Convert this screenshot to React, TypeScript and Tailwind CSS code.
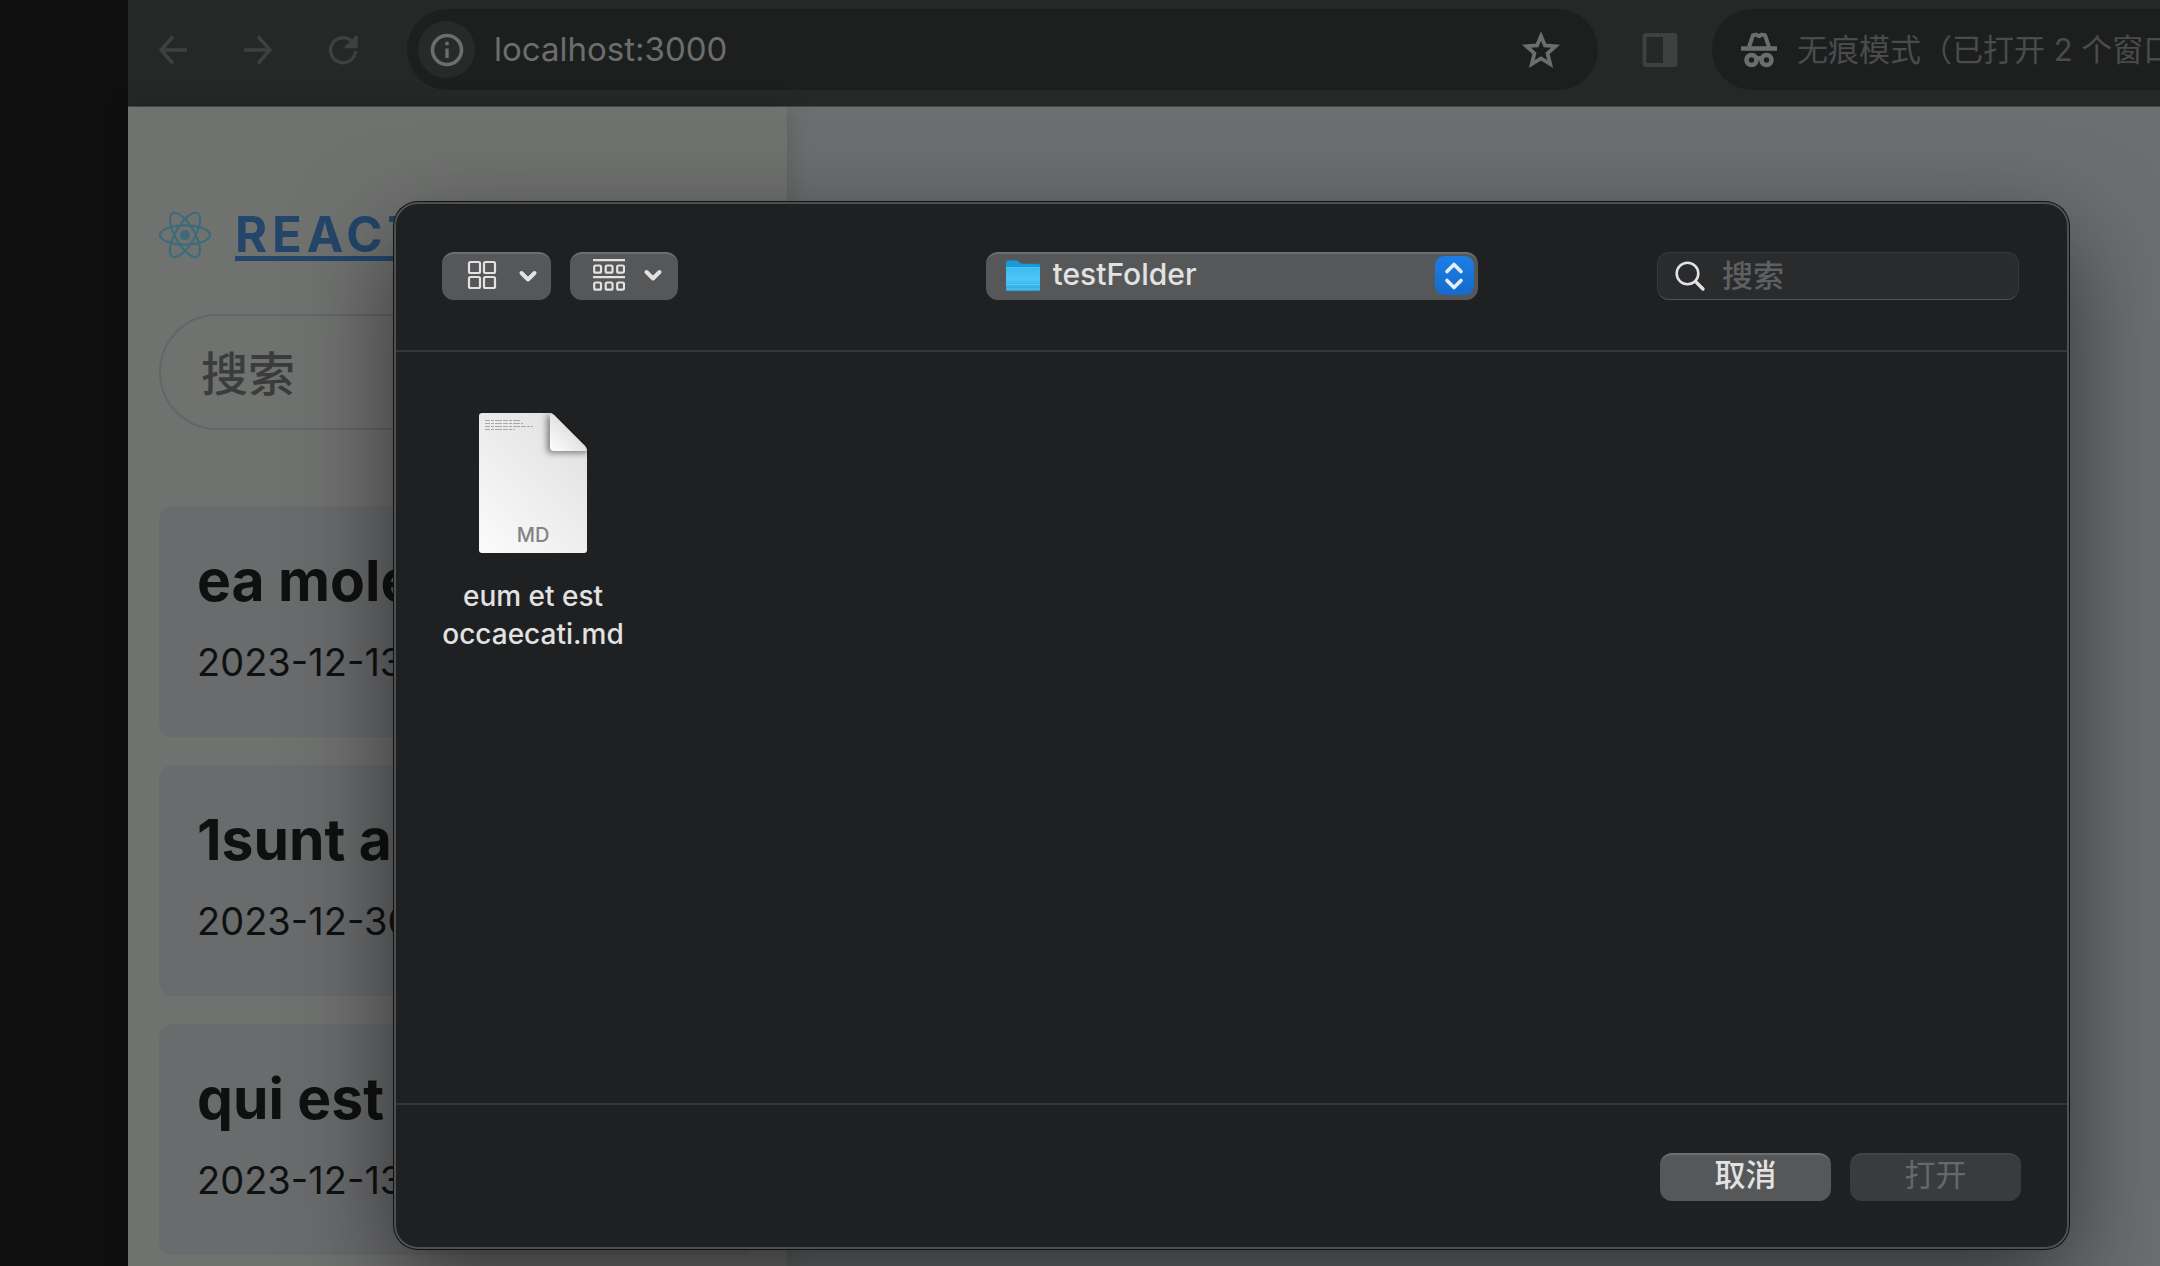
import React from "react";

const notes = [
  { title: "ea molestias", date: "2023-12-13" },
  { title: "1sunt a", date: "2023-12-30" },
  { title: "qui est", date: "2023-12-13" },
];

function BackIcon() {
  return (
    <svg className="h-8 w-8" viewBox="0 0 32 32" fill="none" stroke="currentColor" strokeWidth="3.400">
      <path d="M30 16H4M16 2.500 4 16l12 13.500" />
    </svg>
  );
}

function ForwardIcon() {
  return (
    <svg className="h-8 w-8" viewBox="0 0 32 32" fill="none" stroke="currentColor" strokeWidth="3.400">
      <path d="M2 16h26M16 2.500 28 16 16 29.500" />
    </svg>
  );
}

function ReloadIcon() {
  return (
    <svg className="h-8 w-8" viewBox="0 0 32 32" fill="none" stroke="currentColor" strokeWidth="3.400">
      <path d="M28.500 17A12.500 12.500 0 1 1 25.500 8" />
      <path d="M29 2v10.500H18.500M28 12V5l-7 7z" />
    </svg>
  );
}

function InfoIcon() {
  return (
    <svg className="h-9 w-9" viewBox="0 0 36 36" fill="none" stroke="currentColor">
      <circle cx="18" cy="18" r="14.500" strokeWidth="3.600" />
      <path d="M18 16.500V26M18 9.800v3.400" strokeWidth="3.400" />
    </svg>
  );
}

function StarIcon() {
  return (
    <svg className="h-10 w-10" viewBox="0 0 40 40" fill="none" stroke="currentColor" strokeWidth="3.800">
      <path d="M20 6 24 15.400 34.500 16.200 26.600 23.400 29.200 34 20 28.400 10.800 34 13.400 23.400 5.500 16.200 16 15.400Z" />
    </svg>
  );
}

function SidePanelIcon() {
  return (
    <svg className="h-9 w-9" viewBox="0 0 36 36">
      <rect x="2.500" y="3" width="31" height="30" rx="1.500" fill="none" stroke="currentColor" strokeWidth="3.800" />
      <path d="M21 2h13v32H21z" fill="currentColor" />
    </svg>
  );
}

function IncognitoIcon() {
  return (
    <svg className="h-9 w-9 shrink-0" viewBox="0 0 36 36" fill="none" stroke="currentColor">
      <path d="M8 15 12 3.200 15 2.600 18 4.300 21 2.600 24 3.200 28 15" strokeWidth="4" strokeLinejoin="round" />
      <path d="M0 16.500h36" strokeWidth="4.600" />
      <circle cx="10.500" cy="28" r="5" strokeWidth="4.600" />
      <circle cx="25.500" cy="28" r="5" strokeWidth="4.600" />
      <path d="M15 27q3-2 6 0" strokeWidth="4" />
    </svg>
  );
}

function ReactLogo() {
  return (
    <svg className="h-13 w-13 text-[#3d6b7b]" viewBox="0 0 52 52" fill="none" stroke="currentColor" strokeWidth="2.200">
      <circle cx="26" cy="26" r="5" fill="currentColor" stroke="none" />
      <ellipse cx="26" cy="26" rx="25" ry="9.600" />
      <ellipse cx="26" cy="26" rx="25" ry="9.600" transform="rotate(60 26 26)" />
      <ellipse cx="26" cy="26" rx="25" ry="9.600" transform="rotate(120 26 26)" />
    </svg>
  );
}

function ChevronDown() {
  return (
    <svg className="h-5 w-5" viewBox="0 0 20 20" fill="none" stroke="currentColor" strokeWidth="4" strokeLinecap="round" strokeLinejoin="round">
      <path d="M3.500 7 10 13.500 16.500 7" />
    </svg>
  );
}

function GridIcon() {
  return (
    <svg className="h-8 w-8" viewBox="0 0 32 32" fill="none" stroke="currentColor" strokeWidth="2.200">
      <rect x="3" y="2" width="11" height="11" rx="1.500" />
      <rect x="18" y="2" width="11" height="11" rx="1.500" />
      <rect x="3" y="17" width="11" height="11" rx="1.500" />
      <rect x="18" y="17" width="11" height="11" rx="1.500" />
    </svg>
  );
}

function GroupIcon() {
  return (
    <svg className="h-8 w-8" viewBox="0 0 32 32" fill="none" stroke="currentColor" strokeWidth="2.200">
      <path d="M0 1.200h32M0 18.200h32" />
      {[1.2, 12.7, 24.2].map((x) => (
        <g key={x}>
          <rect x={x} y="6.500" width="6.800" height="7.200" rx="1.500" />
          <rect x={x} y="23.500" width="6.800" height="7.200" rx="1.500" />
        </g>
      ))}
    </svg>
  );
}

function FolderIcon() {
  return (
    <svg className="h-8 w-[34px]" viewBox="0 0 34 32">
      <defs>
        <linearGradient id="folder-front" x1="0" y1="0" x2="0" y2="1">
          <stop offset="0" stopColor="#3fb9f0" />
          <stop offset="0.500" stopColor="#4cc5f7" />
          <stop offset="1" stopColor="#2ea5e0" />
        </linearGradient>
      </defs>
      <path d="M0 2.500Q0 .5 2 .5h8q1.500 0 2.500 1l1.500 1.500q.8.700 2 .7h16q2 0 2 2V12H0z" fill="#149bdb" />
      <path d="M0 7.500h34v22q0 1.500-1.500 1.500h-31Q0 31 0 29.500z" fill="url(#folder-front)" />
      <path d="M0 7.500h34M0 24.500h34M0 29h34" stroke="#6fd3fa" strokeWidth="0.600" />
    </svg>
  );
}

function FileIcon() {
  return (
    <svg className="h-[142px] w-[110px]" viewBox="0 0 110 142">
      <defs>
        <linearGradient id="paper" x1="1" y1="0" x2="0.200" y2="1">
          <stop offset="0" stopColor="#dedede" />
          <stop offset="1" stopColor="#f9f9f9" />
        </linearGradient>
        <linearGradient id="fold" x1="0" y1="1" x2="0.600" y2="0.400">
          <stop offset="0" stopColor="#ffffff" />
          <stop offset="1" stopColor="#dedede" />
        </linearGradient>
        <filter id="fold-shadow" x="-50%" y="-50%" width="200%" height="200%">
          <feGaussianBlur stdDeviation="3" />
        </filter>
        <clipPath id="paper-shape">
          <path d="M4 1h67q3 0 5 2l31 31q2 2 2 5v99q0 3-3 3H4q-3 0-3-3V4q0-3 3-3z" />
        </clipPath>
      </defs>
      <g clipPath="url(#paper-shape)">
        <path d="M0 0h110v142H0z" fill="url(#paper)" />
        <path d="M69 2v36q0 3 3 3h38V24z" fill="#000000" opacity="0.450" filter="url(#fold-shadow)" />
        <path d="M72 0v35q0 4 4 4h34V0z" fill="url(#fold)" />
      </g>
      <g stroke="#a8a8a8" strokeWidth="1" strokeDasharray="5 1 3 1 7 1">
        <path d="M7 8.500h36M7 11.500h38M7 14.500h48M7 17.500h30" />
      </g>
      <text x="55" y="130" textAnchor="middle" fill="#838383" className="font-['Inter',sans-serif] text-[20px]">
        MD
      </text>
    </svg>
  );
}

function BrowserBar() {
  return (
    <header className="flex h-[107px] shrink-0 items-center border-b border-[#474948] bg-[#262828] pb-[7px] pl-[29px] text-[#3f4140]">
      <div className="flex shrink-0 gap-[53px]">
        <button type="button" aria-label="后退"><BackIcon /></button>
        <button type="button" aria-label="前进"><ForwardIcon /></button>
        <button type="button" aria-label="重新加载"><ReloadIcon /></button>
      </div>
      <div className="ml-12 flex h-[81px] min-w-0 flex-1 items-center rounded-full bg-[#1d1f1e] pr-[37px] pl-[11px] text-[#6c6e6d]">
        <button type="button" aria-label="网站信息" className="flex h-[57px] w-[57px] shrink-0 items-center justify-center rounded-full bg-[#282a29]">
          <InfoIcon />
        </button>
        <input
          aria-label="地址"
          defaultValue="localhost:3000"
          className="ml-[19px] min-w-0 flex-1 bg-transparent text-[33px] outline-none"
        />
        <button type="button" aria-label="加入书签" className="shrink-0"><StarIcon /></button>
      </div>
      <button type="button" aria-label="侧边栏" className="mr-[34px] ml-11 shrink-0"><SidePanelIcon /></button>
      <div className="flex h-[81px] w-[448px] shrink-0 items-center gap-5 overflow-hidden rounded-l-full bg-[#1d1f1e] pl-[29px] text-[#6c6e6d]">
        <IncognitoIcon />
        <span className="pt-[2px] text-[31px] whitespace-nowrap text-[#4a4b4d]">无痕模式（已打开 2 个窗口）</span>
      </div>
    </header>
  );
}

function Sidebar() {
  return (
    <aside className="w-[659px] shrink-0 bg-[#707270] px-[31px] pt-[97px] shadow-[0_0_24px_rgba(0,0,0,0.15)]">
      <div className="flex h-[62px] items-center gap-6">
        <ReactLogo />
        <a href="#" className="text-[49px] leading-[62px] font-bold tracking-widest text-[#24466a] underline decoration-[5px] underline-offset-4">
          REACT
        </a>
      </div>
      <input
        aria-label="搜索笔记"
        placeholder="搜索"
        className="mt-12 h-[116px] w-full rounded-full border-2 border-[#646567] bg-transparent px-10 pt-[2px] text-[47px] font-medium outline-none placeholder:text-[#3b3d3c]"
      />
      <ul className="mt-[76px] flex flex-col gap-[28px]">
        {notes.map((note) => (
          <li key={note.title} className="h-[231px] overflow-hidden rounded-[14px] bg-[#6a6b6d] px-[38px] pt-10 text-[#0f1110]">
            <h2 className="truncate text-[57px] leading-[70px] font-bold">{note.title}</h2>
            <p className="mt-[22px] text-[38px] leading-[48px]">{note.date}</p>
          </li>
        ))}
      </ul>
    </aside>
  );
}

function OpenDialog() {
  return (
    <section
      role="dialog"
      aria-label="打开文件"
      className="absolute top-[202px] right-[91px] bottom-[17px] left-[394px] flex flex-col overflow-hidden rounded-[24px] border-2 border-[#4d4f51] bg-[#1f2022] text-[#e2e2e2] shadow-[0_0_0_1px_#101111,0_36px_100px_rgba(0,0,0,0.55)]"
    >
      <div className="flex h-[148px] shrink-0 items-center justify-between border-b-2 border-[#353638] pr-12 pb-[3px] pl-[46px]">
        <div className="flex gap-[19px]">
          <button type="button" aria-label="显示方式" className="flex h-12 w-[109px] items-center gap-5 rounded-xl border-t-2 border-[#6d6e6f] bg-[#565758] pb-[2px] pl-6">
            <GridIcon />
            <ChevronDown />
          </button>
          <button type="button" aria-label="分组方式" className="flex h-12 w-[108px] items-center gap-[18px] rounded-xl border-t-2 border-[#6d6e6f] bg-[#565758] pb-[4px] pl-[23px]">
            <GroupIcon />
            <ChevronDown />
          </button>
        </div>
        <div className="ml-[128px] grid w-[492px] items-center">
          <select
            aria-label="文件夹"
            className="col-start-1 row-start-1 h-12 appearance-none rounded-xl border-t-2 border-[#6d6e6f] bg-[#565758] pb-[5px] pl-[67px] text-[30px] leading-10 font-medium"
          >
            <option>testFolder</option>
          </select>
          <span className="pointer-events-none col-start-1 row-start-1 flex items-center justify-between pr-1 pl-5">
            <FolderIcon />
            <span className="flex h-[39px] w-[39px] items-center justify-center rounded-[9px] bg-linear-to-b from-[#1c7ee6] to-[#166acb] text-[#e4effb]">
              <svg className="h-8 w-8" viewBox="0 0 32 32" fill="none" stroke="currentColor" strokeWidth="3.600" strokeLinecap="round" strokeLinejoin="round">
                <path d="M9 11.500 16 4.500l7 7M9 20.500l7 7 7-7" />
              </svg>
            </span>
          </span>
        </div>
        <label className="flex h-12 w-[362px] items-center rounded-xl border border-[#38393b] border-b-[#505153] bg-[#2a2b2d] pl-4">
          <svg className="h-8 w-8 shrink-0" viewBox="0 0 32 32" fill="none" stroke="currentColor" strokeLinecap="round">
            <circle cx="13.500" cy="13.500" r="10.800" strokeWidth="2.600" />
            <path d="m21.500 21.500 7.500 7.500" strokeWidth="3.400" />
          </svg>
          <input
            aria-label="搜索文件"
            placeholder="搜索"
            className="ml-4 min-w-0 flex-1 bg-transparent text-[31px] leading-10 font-medium outline-none placeholder:text-[#5f6062]"
          />
        </label>
      </div>

      <ul className="flex min-h-0 flex-1 px-9 pt-[60px]">
        <li>
          <button type="button" className="flex w-[202px] flex-col items-center gap-[23px] text-[28px] leading-[38px] font-medium">
            <FileIcon />
            <span>eum et est occaecati.md</span>
          </button>
        </li>
      </ul>

      <div className="flex h-[144px] shrink-0 items-start justify-end gap-[19px] border-t-2 border-[#353638] pt-12 pr-[46px] text-[31px] leading-10">
        <button type="button" className="h-12 w-[171px] rounded-xl border-t-2 border-[#6d6e6f] bg-[#565758] pb-[6px] font-medium">
          取消
        </button>
        <button type="button" disabled className="h-12 w-[171px] rounded-xl border-t-2 border-[#424345] bg-[#3a3b3d] pb-[6px] text-[#67686a]">
          打开
        </button>
      </div>
    </section>
  );
}

export default function App() {
  return (
    <div className="relative flex h-screen overflow-hidden bg-[#0f0f0f] font-['Inter','Noto_Sans_CJK_SC',sans-serif]">
      <div className="w-32 shrink-0" />
      <div className="flex min-w-0 flex-1 flex-col">
        <BrowserBar />
        <div className="flex min-h-0 flex-1 bg-[#6c6e70]">
          <Sidebar />
          <main className="flex-1" />
        </div>
      </div>
      <OpenDialog />
    </div>
  );
}
